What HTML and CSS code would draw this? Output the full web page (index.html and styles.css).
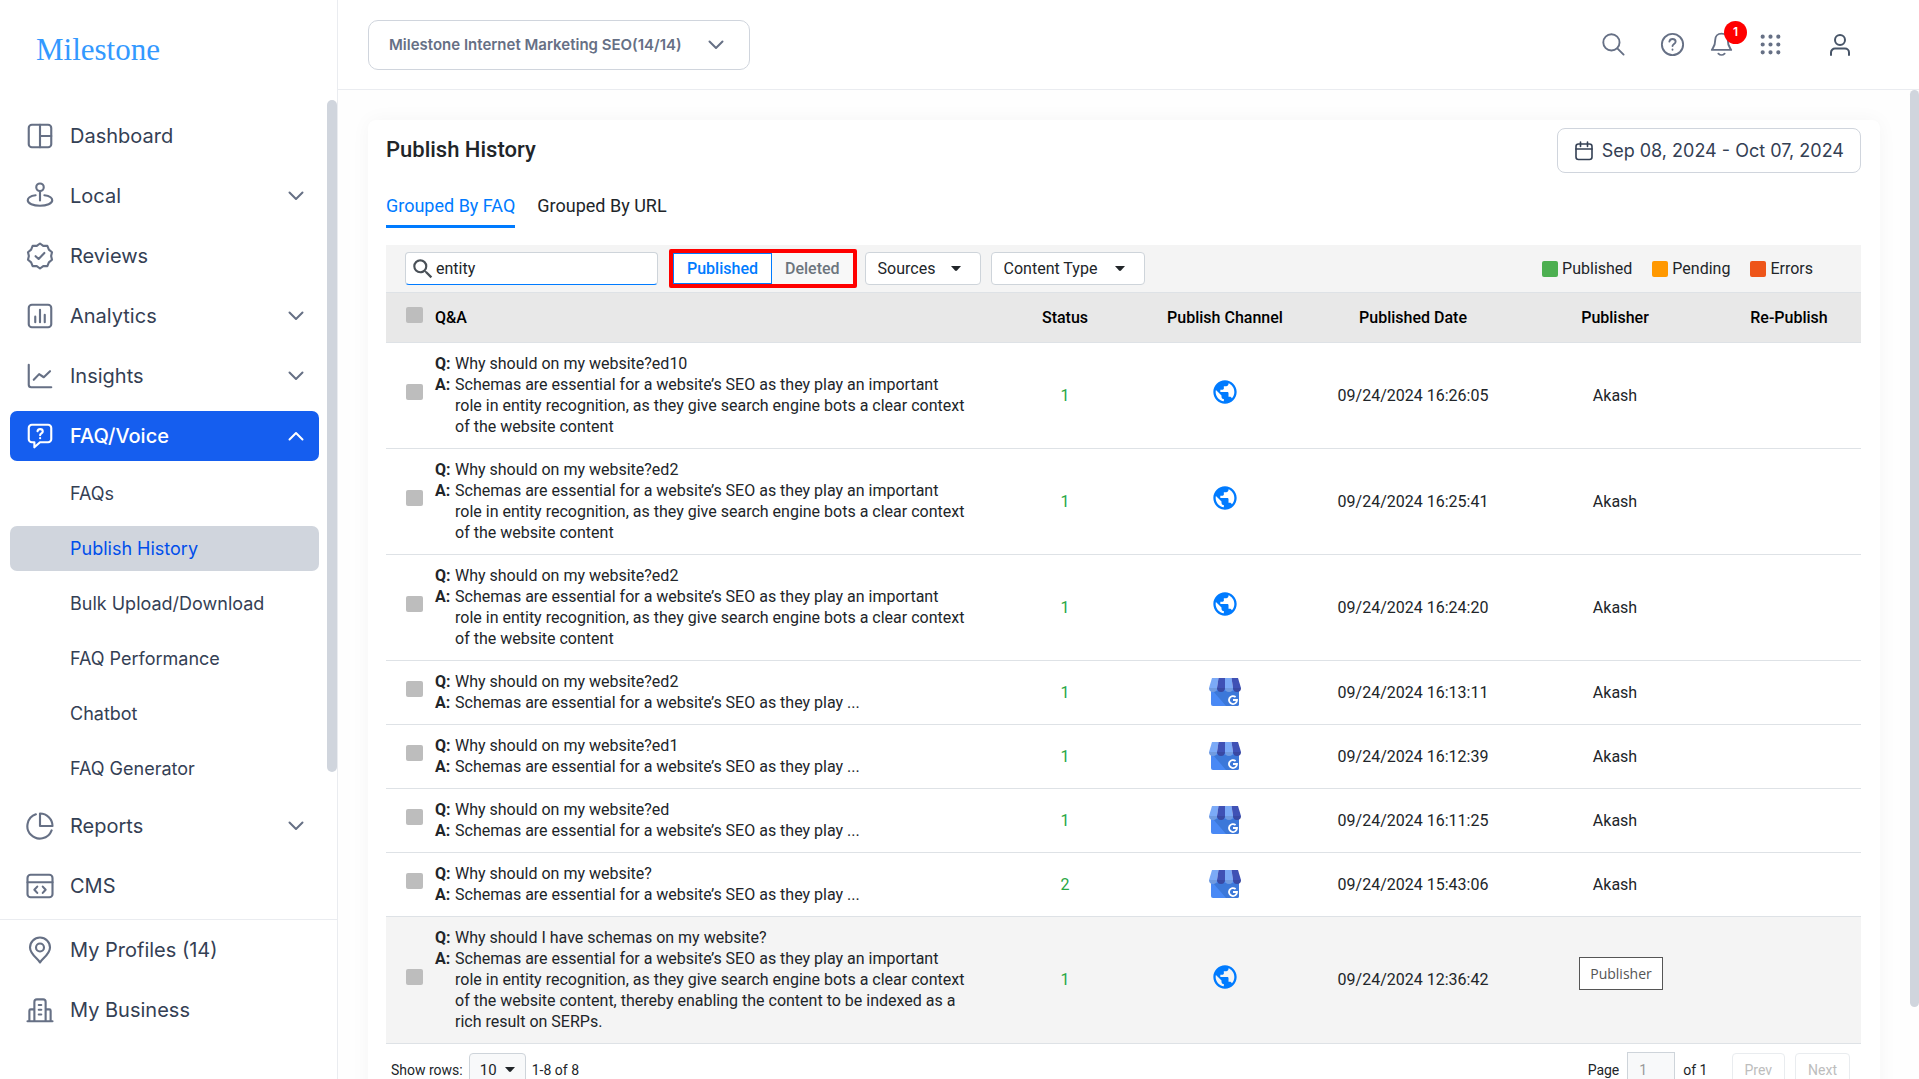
FILE: index.html
```html
<!DOCTYPE html>
<html lang="en">
  <head>
    <meta charset="UTF-8" />
    <meta name="viewport" content="width=device-width, initial-scale=1.0" />
    <title>Publish History</title>
    <link rel="stylesheet" href="styles.css">
  </head>
  <body>
    <!-- shared icons -->
    <svg class="sprite" xmlns="http://www.w3.org/2000/svg">
      <symbol id="chevron" viewBox="0 0 16 10"><path d="M1.5 1.5 8 8l6.5-6.5" /></symbol>
      <symbol id="caret" viewBox="0 0 10 6"><path d="M0 0h10L6 4.6q-1 .9-2 0z" /></symbol>
      <symbol id="globe" viewBox="0 0 24 24">
        <path d="M12 2C6.48 2 2 6.48 2 12s4.48 10 10 10 10-4.48 10-10S17.52 2 12 2zm-1 17.93c-3.95-.49-7-3.85-7-7.93 0-.62.08-1.21.21-1.79L9 15v1c0 1.1.9 2 2 2v1.93zm6.9-2.54c-.26-.81-1-1.39-1.9-1.39h-1v-3c0-.55-.45-1-1-1H8v-2h2c.55 0 1-.45 1-1V7h2c1.1 0 2-.9 2-2v-.41c2.93 1.19 5 4.06 5 7.41 0 2.08-.8 3.97-2.1 5.39z" />
      </symbol>
      <symbol id="store" viewBox="0 0 32 28">
        <path fill="#4989f5" d="M2 10h28v16a2 2 0 0 1-2 2H4a2 2 0 0 1-2-2z" />
        <path fill="#3c78d9" d="M4 13h26v13a2 2 0 0 1-2 2H17z" />
        <path fill="#7baaf7" d="M3 0h6.500L8 10H0z" />
        <path fill="#3f51b5" d="M9.500 0H16v10H8z" />
        <path fill="#7baaf7" d="M16 0h6.500L24 10h-8z" />
        <path fill="#3f51b5" d="M22.500 0H29l3 10h-8z" />
        <path fill="#709be0" d="M0 10h8a4 4 0 0 1-8 0z" />
        <path fill="#3949a3" d="M8 10h8a4 4 0 0 1-8 0z" />
        <path fill="#709be0" d="M16 10h8a4 4 0 0 1-8 0z" />
        <path fill="#3949a3" d="M24 10h8a4 4 0 0 1-8 0z" />
        <path fill="none" stroke="#fff" stroke-width="1.800" d="M26.600 19a4 4 0 1 0 1.400 3h-4" />
      </symbol>
    </svg>

    <div class="app">
      <aside class="sidebar">
        <a href="#" class="logo">Milestone</a>

        <nav class="menu">
          <a href="#" class="menu-item">
            <svg class="icon" viewBox="0 0 24 24"><rect x="3" y="3" width="18" height="18" rx="2.500" /><path d="M12 3v18M12 12h9" /></svg>
            <span>Dashboard</span>
          </a>
          <a href="#" class="menu-item">
            <svg class="icon" viewBox="0 0 24 24"><circle cx="12" cy="5" r="3" /><path d="M12 8v7.500M8.500 11.400C5 11.900 2.200 13.300 2.200 15.400c0 2.600 4.400 4.400 9.800 4.400s9.800-1.800 9.800-4.400c0-2.100-2.800-3.500-6.300-4" /></svg>
            <span>Local</span>
            <svg class="chevron"><use href="#chevron" /></svg>
          </a>
          <a href="#" class="menu-item">
            <svg class="icon" viewBox="0 0 24 24"><path d="M12 2 9.400 3.900 6.100 3.900 4.900 6.900 2.400 9 3.100 12 2.400 15 4.900 17.100 6.100 20.100 9.400 20.100 12 22 14.600 20.100 17.900 20.100 19.100 17.100 21.600 15 20.900 12 21.600 9 19.100 6.900 17.900 3.900 14.600 3.900zM8.500 12.200l2.400 2.200 4.600-4.800" /></svg>
            <span>Reviews</span>
          </a>
          <a href="#" class="menu-item">
            <svg class="icon" viewBox="0 0 24 24"><rect x="3" y="3" width="18" height="18" rx="2.500" /><path d="M8.200 12.500V17M12 7v10M15.800 11v6" /></svg>
            <span>Analytics</span>
            <svg class="chevron"><use href="#chevron" /></svg>
          </a>
          <a href="#" class="menu-item">
            <svg class="icon" viewBox="0 0 24 24"><path d="M3 3v16a2 2 0 0 0 2 2h16M7 15l4.300-4.500 3.700 2.500 5-4.800" /></svg>
            <span>Insights</span>
            <svg class="chevron"><use href="#chevron" /></svg>
          </a>
          <a href="#" class="menu-item active">
            <svg class="icon" viewBox="0 0 24 24"><path d="M5.500 3h13A2.500 2.500 0 0 1 21 5.500v9a2.500 2.500 0 0 1-2.500 2.500H12l-4.500 4V17h-2A2.500 2.500 0 0 1 3 14.500v-9A2.500 2.500 0 0 1 5.500 3z" /><path d="M10 8.200c.2-1.100 1-1.700 2.100-1.700 1.200 0 2.100.8 2.100 1.900 0 1.500-2.100 1.600-2.100 3M12.100 13.600v.2" /></svg>
            <span>FAQ/Voice</span>
            <svg class="chevron up"><use href="#chevron" /></svg>
          </a>
          <div class="submenu">
            <a href="#">FAQs</a>
            <a href="#" class="selected">Publish History</a>
            <a href="#">Bulk Upload/Download</a>
            <a href="#">FAQ Performance</a>
            <a href="#">Chatbot</a>
            <a href="#">FAQ Generator</a>
          </div>
          <a href="#" class="menu-item">
            <svg class="icon" viewBox="0 0 24 24"><path d="M8.700 2.600A10 10 0 1 0 21.300 15.500" /><path d="M12 2v10h10A10 10 0 0 0 12 2z" /></svg>
            <span>Reports</span>
            <svg class="chevron"><use href="#chevron" /></svg>
          </a>
          <a href="#" class="menu-item">
            <svg class="icon" viewBox="0 0 24 24"><rect x="2" y="3" width="20" height="18" rx="2.500" /><path d="M2 9h20M9.800 12.500 7.500 15l2.300 2.500M14.200 12.500l2.300 2.500-2.300 2.500" /></svg>
            <span>CMS</span>
          </a>
          <div class="scroll-thumb"></div>
        </nav>

        <nav class="menu-bottom">
          <a href="#" class="menu-item">
            <svg class="icon" viewBox="0 0 24 24"><path d="M12 22c-1.500-3-8-6.500-8-12a8 8 0 0 1 16 0c0 5.500-6.500 9-8 12z" /><circle cx="12" cy="10" r="3.200" /></svg>
            <span>My Profiles (14)</span>
          </a>
          <a href="#" class="menu-item">
            <svg class="icon" viewBox="0 0 24 24"><path d="M2 21h20M7.500 21V5.500A2 2 0 0 1 9.500 3.500h5a2 2 0 0 1 2 2V21M7.500 11.500h-3a1 1 0 0 0-1 1V21M16.500 11.500h3a1 1 0 0 1 1 1V21M11 8h2M11 11.800h2M11 15.600h2" /></svg>
            <span>My Business</span>
          </a>
        </nav>
      </aside>

      <div class="page">
        <header class="topbar">
          <label class="select account">
            <select aria-label="Account">
              <option>Milestone Internet Marketing SEO(14/14)</option>
            </select>
            <svg class="chevron"><use href="#chevron" /></svg>
          </label>
          <div class="tools">
            <button class="tool search" aria-label="Search">
              <svg viewBox="0 0 24 24"><circle cx="10" cy="10" r="7.800" /><path d="m15.700 15.700 6 6" /></svg>
            </button>
            <button class="tool" aria-label="Help">
              <svg viewBox="0 0 24 24"><circle cx="12" cy="12" r="10.200" /><path d="M9 9.200c.3-1.600 1.500-2.500 3-2.500 1.700 0 3 1.100 3 2.700 0 2-3 2.300-3 4.100M12 16.800v.2" /></svg>
            </button>
            <button class="tool" aria-label="Notifications">
              <svg viewBox="0 0 24 24"><path d="M12 1.500c-3.600 0-6 2.600-6 6 0 6-1.700 7-3.300 9.700h18.600C19.700 14.500 18 13.500 18 7.500c0-3.400-2.400-6-6-6zM9 20.800c1.700 1.600 4.300 1.600 6 0" /></svg>
              <span class="badge">1</span>
            </button>
            <button class="tool apps" aria-label="Apps">
              <svg viewBox="0 0 24 24"><path d="M4.500 4.500h.01M12 4.500h.01M19.500 4.500h.01M4.500 12h.01M12 12h.01M19.500 12h.01M4.500 19.500h.01M12 19.500h.01M19.500 19.500h.01" /></svg>
            </button>
            <button class="tool user" aria-label="Account menu">
              <svg viewBox="0 0 24 24"><circle cx="12" cy="7" r="5" /><path d="M3 22v-2.500a4 4 0 0 1 4-4h10a4 4 0 0 1 4 4V22" /></svg>
            </button>
          </div>
        </header>

        <main class="main">
          <section class="card">
            <div class="card-head">
              <h1>Publish History</h1>
              <button class="date-range">
                <svg viewBox="0 0 20 20"><rect x="2" y="3" width="16" height="15.500" rx="2.500" /><path d="M2 8h16M6.500 1v4.500M13.500 1v4.500" /></svg>
                Sep 08, 2024 - Oct 07, 2024
              </button>
            </div>

            <nav class="tabs">
              <a href="#" class="current">Grouped By FAQ</a>
              <a href="#">Grouped By URL</a>
            </nav>

            <div class="filters">
              <label class="search-box">
                <svg viewBox="0 0 24 24"><path d="M15.500 14h-.79l-.28-.27A6.471 6.471 0 0 0 16 9.500 6.500 6.500 0 1 0 9.500 16c1.610 0 3.090-.59 4.230-1.570l.27.28v.79l5 4.990L20.490 19l-4.990-5zm-6 0C7.010 14 5 11.990 5 9.500S7.010 5 9.500 5 14 7.010 14 9.500 11.990 14 9.500 14z" /></svg>
                <input type="text" value="entity" aria-label="Search" />
              </label>
              <div class="toggle">
                <button class="on">Published</button>
                <button>Deleted</button>
              </div>
              <label class="select sources">
                <select aria-label="Sources"><option>Sources</option></select>
                <svg class="caret"><use href="#caret" /></svg>
              </label>
              <label class="select content-type">
                <select aria-label="Content Type"><option>Content Type</option></select>
                <svg class="caret"><use href="#caret" /></svg>
              </label>
              <ul class="legend">
                <li class="published">Published</li>
                <li class="pending">Pending</li>
                <li class="errors">Errors</li>
              </ul>
            </div>

            <table class="history">
              <thead>
                <tr>
                  <th class="col-check"><input type="checkbox" aria-label="Select all" /></th>
                  <th class="col-qa">Q&amp;A</th>
                  <th class="col-status">Status</th>
                  <th class="col-channel">Publish Channel</th>
                  <th class="col-date">Published Date</th>
                  <th class="col-publisher">Publisher</th>
                  <th class="col-republish">Re-Publish</th>
                </tr>
              </thead>
              <tbody id="historyRows"></tbody>
            </table>

            <div class="pager">
              <label for="rowCount">Show rows:</label>
              <div class="select rows">
                <select id="rowCount"><option>10</option></select>
                <svg class="caret"><use href="#caret" /></svg>
              </div>
              <span>1-8 of 8</span>
              <div class="pager-right">
                <label for="pageNo">Page</label>
                <input type="text" id="pageNo" value="1" />
                <span>of 1</span>
                <button disabled>Prev</button>
                <button disabled>Next</button>
              </div>
            </div>
          </section>
        </main>
        <div class="scroll-thumb"></div>
      </div>
    </div>

    <script>
      const short = 'Schemas are essential for a website’s SEO as they play ...';
      const long =
        'Schemas are essential for a website’s SEO as they play an important role in entity recognition, as they give search engine bots a clear context of the website content';

      const rows = [
        { q: 'Why should on my website?ed10', a: long, status: 1, channel: 'globe', date: '09/24/2024 16:26:05' },
        { q: 'Why should on my website?ed2', a: long, status: 1, channel: 'globe', date: '09/24/2024 16:25:41' },
        { q: 'Why should on my website?ed2', a: long, status: 1, channel: 'globe', date: '09/24/2024 16:24:20' },
        { q: 'Why should on my website?ed2', a: short, status: 1, channel: 'store', date: '09/24/2024 16:13:11' },
        { q: 'Why should on my website?ed1', a: short, status: 1, channel: 'store', date: '09/24/2024 16:12:39' },
        { q: 'Why should on my website?ed', a: short, status: 1, channel: 'store', date: '09/24/2024 16:11:25' },
        { q: 'Why should on my website?', a: short, status: 2, channel: 'store', date: '09/24/2024 15:43:06' },
        {
          q: 'Why should I have schemas on my website?',
          a: long + ', thereby enabling the content to be indexed as a rich result on SERPs.',
          status: 1,
          channel: 'globe',
          date: '09/24/2024 12:36:42',
          hover: true,
        },
      ];

      const historyRows = document.getElementById('historyRows');

      rows.forEach((row) => {
        const tr = document.createElement('tr');
        if (row.hover) tr.classList.add('hover');
        tr.innerHTML = `
          <td class="col-check"><input type="checkbox" aria-label="Select row" /></td>
          <td class="col-qa">
            <dl>
              <dt>Q:</dt><dd>${row.q}</dd>
              <dt>A:</dt><dd>${row.a}</dd>
            </dl>
          </td>
          <td class="status">${row.status}</td>
          <td><svg class="${row.channel}"><use href="#${row.channel}" /></svg></td>
          <td>${row.date}</td>
          <td>${row.hover ? '<div class="tooltip">Publisher</div>' : 'Akash'}</td>
          <td></td>
        `;
        historyRows.appendChild(tr);
      });
    </script>
  </body>
</html>
```
FILE: styles.css
```css
* {
  box-sizing: border-box;
}

body {
  margin: 0;
  font-family: Roboto, "Liberation Sans", sans-serif;
  font-size: 16px;
  color: #212529;
  background-color: #fff;
}

a {
  text-decoration: none;
  color: inherit;
}

button,
input,
select {
  font: inherit;
  color: inherit;
  margin: 0;
}

button {
  cursor: pointer;
}

.sprite {
  position: absolute;
  width: 0;
  height: 0;
}

.app {
  display: flex;
  height: 100vh;
  overflow: hidden;
}

/* sidebar */
.sidebar {
  display: flex;
  flex-direction: column;
  flex: 0 0 338px;
  border-right: 1px solid #eaecf0;
  font-family: Inter, "Liberation Sans", sans-serif;
  color: #344054;
}

.logo {
  height: 100px;
  padding: 28px 0 0 36px;
  font-family: "Liberation Serif", serif;
  font-size: 31px;
  line-height: 44px;
  color: #3399ff;
}

.menu {
  position: relative;
  flex: 1;
  min-height: 0;
  padding: 11px 18px 0 10px;
  overflow: hidden;
}

.menu-item {
  display: flex;
  align-items: center;
  gap: 15px;
  height: 50px;
  margin-bottom: 10px;
  padding: 0 15px;
  border-radius: 7px;
  font-size: 20px;
}

.menu-item span {
  flex: 1;
}

.menu-item.active {
  background-color: #155eef;
  color: #fff;
  font-weight: 500;
}

.icon {
  width: 30px;
  height: 30px;
  fill: none;
  stroke: #667085;
  stroke-width: 1.7;
  stroke-linecap: round;
  stroke-linejoin: round;
}

.active .icon,
.active .chevron {
  stroke: #fff;
}

.chevron {
  width: 16px;
  height: 10px;
  fill: none;
  stroke: #667085;
  stroke-width: 2;
  stroke-linecap: round;
  stroke-linejoin: round;
}

.chevron.up {
  transform: rotate(180deg);
}

.submenu a {
  display: flex;
  align-items: center;
  height: 45px;
  margin-bottom: 10px;
  padding-left: 60px;
  border-radius: 7px;
  font-size: 18px;
}

.submenu .selected {
  background-color: #d0d5dd;
  color: #004eeb;
}

.scroll-thumb {
  position: absolute;
  top: 0;
  right: 0;
  width: 10px;
  height: 82%;
  border-radius: 5px;
  background-color: #d0d5dd;
}

.menu-bottom {
  padding: 5px 18px 34px 10px;
  border-top: 1px solid #eaecf0;
}

/* top bar */
.page {
  position: relative;
  display: flex;
  flex-direction: column;
  flex: 1;
  min-width: 0;
}

.page > .scroll-thumb {
  top: 90px;
  width: 9px;
  height: 85%;
}

.topbar {
  display: flex;
  align-items: center;
  justify-content: space-between;
  flex: 0 0 90px;
  padding: 0 67px 0 30px;
  border-bottom: 1px solid #eaecf0;
}

.select {
  position: relative;
  display: inline-flex;
  align-items: center;
}

.select select {
  appearance: none;
  width: 100%;
  height: 100%;
  border: 1px solid #ced4da;
  border-radius: 4px;
  background-color: #fff;
  padding: 0 12px;
}

.select svg {
  position: absolute;
  right: 20px;
  pointer-events: none;
}

.account {
  width: 382px;
  height: 50px;
  font-family: Inter, "Liberation Sans", sans-serif;
  font-size: 15px;
  font-weight: 600;
  color: #667085;
}

.account select {
  border-color: #d0d5dd;
  border-radius: 10px;
  padding: 0 20px;
}

.account .chevron {
  right: 26px;
}

.tools {
  display: flex;
  align-items: center;
  gap: 24px;
}

.tool {
  position: relative;
  display: flex;
  padding: 0;
  border: 0;
  background: none;
}

.tool svg {
  width: 25px;
  height: 25px;
  fill: none;
  stroke: #667085;
  stroke-width: 1.8;
  stroke-linecap: round;
  stroke-linejoin: round;
}

.tool.search {
  margin-right: 10px;
}

.tool.apps svg {
  stroke-width: 4;
}

.tool.user {
  margin-left: 21px;
}

.tool.user svg {
  width: 24px;
  height: 24px;
  stroke: #475467;
  stroke-width: 2;
}

.badge {
  position: absolute;
  left: 15px;
  top: -11px;
  width: 23px;
  height: 23px;
  border-radius: 50%;
  background-color: #ff0000;
  color: #fff;
  font-family: Inter, "Liberation Sans", sans-serif;
  font-size: 12px;
  font-weight: 600;
  line-height: 22px;
  text-align: center;
}

/* content */
.main {
  flex: 1;
  min-height: 0;
  overflow: hidden;
  padding: 30px 39px 0 30px;
  background-color: #fefefe;
}

.card {
  padding: 8px 19px 30px 18px;
  border-radius: 8px;
  background-color: #fff;
  box-shadow: 0 0 20px rgba(0, 0, 0, 0.04);
}

.card-head {
  display: flex;
  justify-content: space-between;
  height: 45px;
}

.card-head h1 {
  margin: 0;
  font-size: 22px;
  font-weight: 500;
  line-height: 44px;
}

.date-range {
  display: flex;
  align-items: center;
  gap: 8px;
  padding: 0 16px;
  border: 1px solid #d0d5dd;
  border-radius: 8px;
  background-color: #fff;
  font-family: Inter, "Liberation Sans", sans-serif;
  font-size: 18px;
  color: #344054;
}

.date-range svg {
  width: 20px;
  height: 20px;
  fill: none;
  stroke: #344054;
  stroke-width: 1.6;
  stroke-linecap: round;
}

.tabs {
  display: flex;
  gap: 22px;
  margin: 17px 0;
}

.tabs a {
  height: 38px;
  font-size: 18px;
  line-height: 32px;
}

.tabs .current {
  color: #007bff;
  border-bottom: 3px solid #007bff;
}

.filters {
  display: flex;
  align-items: center;
  height: 48px;
  padding: 0 48px 0 19px;
  background-color: #f4f4f4;
  border-bottom: 1px solid #dee2e6;
}

.search-box {
  display: flex;
  align-items: center;
  width: 253px;
  height: 33px;
  border: 1px solid #ced4da;
  border-bottom-color: #007bff;
  border-radius: 4px;
  background-color: #fff;
}

.search-box svg {
  flex: none;
  width: 26px;
  height: 26px;
  margin-left: 4px;
  fill: #495057;
}

.search-box input {
  flex: 1;
  min-width: 0;
  padding: 0;
  border: 0;
  outline: 0;
  background: none;
}

.toggle {
  display: flex;
  height: 39px;
  margin: 0 8px 0 11px;
  border: 4px solid #ff0000;
  border-radius: 2px;
}

.toggle button {
  padding: 0 13px;
  border: 0;
  background-color: #f8f8f8;
  color: #6c757d;
  font-weight: 500;
}

.toggle .on {
  border: 1px solid #007bff;
  background-color: #fff;
  color: #007bff;
}

.sources {
  width: 116px;
  height: 33px;
  margin-right: 10px;
}

.content-type {
  width: 154px;
  height: 33px;
}

.caret {
  width: 10px;
  height: 6px;
  fill: #212529;
}

.legend {
  display: flex;
  gap: 20px;
  margin: 0 0 0 auto;
  padding: 0;
  list-style: none;
}

.legend li {
  display: flex;
  align-items: center;
  gap: 4px;
}

.legend li::before {
  content: "";
  width: 16px;
  height: 16px;
  border-radius: 2px;
}

.legend .published::before {
  background-color: #4caf50;
}

.legend .pending::before {
  background-color: #ff9800;
}

.legend .errors::before {
  background-color: #ee5519;
}

/* table */
.history {
  width: 100%;
  table-layout: fixed;
  border-collapse: separate;
  border-spacing: 0;
}

.history th,
.history td {
  padding: 10px 0;
  border-bottom: 1px solid #dee2e6;
  text-align: center;
}

.history th {
  height: 50px;
  background-color: #e8e8e8;
  color: #000;
  font-weight: 500;
}

.history td {
  padding-bottom: 11px;
  line-height: 21px;
}

.history .col-check {
  width: 49px;
  padding-left: 20px;
  text-align: left;
}

.history .col-qa {
  text-align: left;
}

.col-status {
  width: 144px;
}

.col-channel {
  width: 176px;
}

.col-date {
  width: 200px;
}

.col-publisher {
  width: 204px;
}

.col-republish {
  width: 144px;
}

.history input {
  appearance: none;
  display: block;
  width: 17px;
  height: 16px;
  margin-bottom: 6px;
  border-radius: 2px;
  background-color: #bdbdbd;
}

.history dl {
  display: grid;
  grid-template-columns: 20px 1fr;
  max-width: 532px;
  margin: 0;
}

.history dt {
  font-weight: 700;
}

.history dd {
  margin: 0;
}

.history .status {
  color: #28a745;
}

.history .hover td {
  background-color: #f4f4f4;
}

.globe {
  display: block;
  width: 28px;
  height: 28px;
  margin: 0 auto 6px;
  fill: #007bff;
}

.store {
  display: block;
  width: 32px;
  height: 28px;
  margin: 0 auto;
}

.tooltip {
  display: inline-block;
  margin: 0 0 12px 12px;
  padding: 5px 10px;
  border: 1px solid #555;
  background-color: #fff;
  font-family: "Open Sans", "Noto Sans", sans-serif;
  font-size: 14px;
  color: #555;
}

/* pager */
.pager {
  display: flex;
  align-items: center;
  gap: 6px;
  padding: 8px 11px 0 5px;
  font-size: 14px;
}

.rows {
  width: 57px;
  height: 34px;
  font-size: 15px;
}

.rows select {
  padding: 0 10px;
  background-color: #f8f9fa;
}

.rows .caret {
  right: 11px;
}

.pager-right {
  display: flex;
  align-items: center;
  gap: 8px;
  margin-left: auto;
}

.pager-right input {
  width: 48px;
  height: 36px;
  padding: 0 11px;
  border: 1px solid #ced4da;
  background-color: #f8f9fa;
  color: #999;
}

.pager-right button {
  height: 34px;
  padding: 0 12px;
  border: 1px solid #e9ecef;
  border-radius: 4px;
  background-color: #fff;
  color: #bdbdbd;
}

.pager-right button + button {
  margin-left: 2px;
}

.pager-right span {
  margin-right: 16px;
}
```
